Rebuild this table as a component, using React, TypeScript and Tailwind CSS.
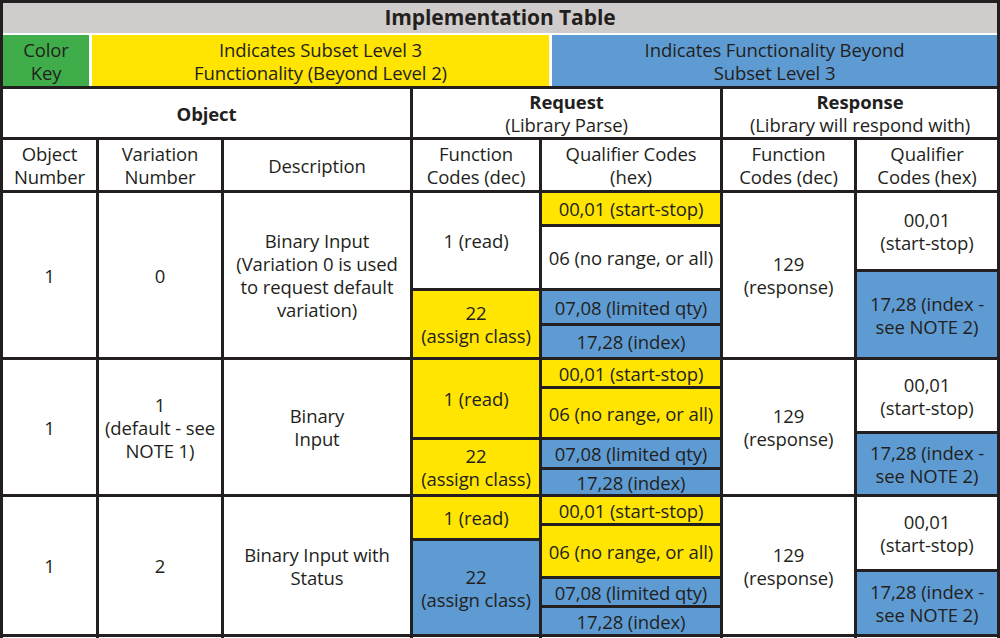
import React from "react";

const Y = "bg-[#ffe500]";
const B = "bg-[#5e9bd3]";
const W = "bg-white";

type Sub = { t: React.ReactNode; c: string; h?: string };

function Cell({ children, className = "" }: { children?: React.ReactNode; className?: string }) {
  return (
    <div className={`flex items-center justify-center text-center leading-[23px] ${className}`}>
      {children}
    </div>
  );
}

function Stack({ items }: { items: Sub[] }) {
  return (
    <div className="flex flex-col gap-[3px] bg-[#231f20]">
      {items.map((it, i) => (
        <Cell key={i} className={`${it.c} ${it.h ?? "flex-1"}`}>
          {it.t}
        </Cell>
      ))}
    </div>
  );
}

const read = "1 (read)";
const assign = (
  <span>
    22
    <br />
    (assign class)
  </span>
);
const resp = (
  <span>
    129
    <br />
    (response)
  </span>
);
const q0001 = (
  <span>
    00,01
    <br />
    (start-stop)
  </span>
);
const q1728 = (
  <span>
    17,28 (index -
    <br />
    see NOTE 2)
  </span>
);

export default function App() {
  return (
    <div
      className="w-[1000px] h-[638px] overflow-hidden bg-white text-[#231f20] text-[18.5px] font-medium tracking-[-0.1px]"
      style={{ fontFamily: "'Open Sans', 'Noto Sans', sans-serif" }}
    >
      <div className="border-[3px] border-[#231f20]">
        <div className="h-[30px] bg-[#d0cccb] flex items-center justify-center font-bold text-[21px]">
          Implementation Table
        </div>
        <div className="h-[2px] bg-white" />
        <div className="flex h-[51px] bg-white gap-[3px] leading-[24px]">
          <Cell className="w-[86px] bg-[#3fae4a]">
            <span>
              Color
              <br />
              Key
            </span>
          </Cell>
          <Cell className={`w-[457px] ${Y}`}>
            <span>
              Indicates Subset Level 3
              <br />
              Functionality (Beyond Level 2)
            </span>
          </Cell>
          <Cell className={`flex-1 ${B}`}>
            <span>
              Indicates Functionality Beyond
              <br />
              Subset Level 3
            </span>
          </Cell>
        </div>
        <div className="grid grid-cols-[93px_122px_186px_126px_178px_131px_140px] grid-rows-[48px_50px_164px_134px_137px_100px] gap-[3px] bg-[#231f20] pt-[3px]">
          <Cell className="col-span-3 bg-white font-bold">Object</Cell>
          <Cell className="col-span-2 bg-white">
            <span>
              <b>Request</b>
              <br />
              (Library Parse)
            </span>
          </Cell>
          <Cell className="col-span-2 bg-white">
            <span>
              <b>Response</b>
              <br />
              (Library will respond with)
            </span>
          </Cell>

          <Cell className={W}>
            <span>
              Object
              <br />
              Number
            </span>
          </Cell>
          <Cell className={W}>
            <span>
              Variation
              <br />
              Number
            </span>
          </Cell>
          <Cell className={W}>Description</Cell>
          <Cell className={W}>
            <span>
              Function
              <br />
              Codes (dec)
            </span>
          </Cell>
          <Cell className={W}>
            <span>
              Qualifier Codes
              <br />
              (hex)
            </span>
          </Cell>
          <Cell className={W}>
            <span>
              Function
              <br />
              Codes (dec)
            </span>
          </Cell>
          <Cell className={W}>
            <span>
              Qualifier
              <br />
              Codes (hex)
            </span>
          </Cell>

          {/* Row 1 */}
          <Cell className={W}>1</Cell>
          <Cell className={W}>0</Cell>
          <Cell className={W}>
            <span>
              Binary Input
              <br />
              (Variation 0 is used
              <br />
              to request default
              <br />
              variation)
            </span>
          </Cell>
          <Stack
            items={[
              { t: read, c: W, h: "h-[95px]" },
              { t: assign, c: Y },
            ]}
          />
          <Stack
            items={[
              { t: "00,01 (start-stop)", c: Y, h: "h-[31px]" },
              { t: "06 (no range, or all)", c: W, h: "h-[61px]" },
              { t: "07,08 (limited qty)", c: B, h: "h-[32px]" },
              { t: "17,28 (index)", c: B },
            ]}
          />
          <Cell className={W}>{resp}</Cell>
          <Stack
            items={[
              { t: q0001, c: W, h: "h-[76px]" },
              { t: q1728, c: B },
            ]}
          />

          {/* Row 2 */}
          <Cell className={W}>1</Cell>
          <Cell className={W}>
            <span>
              1
              <br />
              (default - see
              <br />
              NOTE 1)
            </span>
          </Cell>
          <Cell className={W}>
            <span>
              Binary
              <br />
              Input
            </span>
          </Cell>
          <Stack
            items={[
              { t: read, c: Y, h: "h-[77px]" },
              { t: assign, c: Y },
            ]}
          />
          <Stack
            items={[
              { t: "00,01 (start-stop)", c: Y, h: "h-[26px]" },
              { t: "06 (no range, or all)", c: Y, h: "h-[48px]" },
              { t: "07,08 (limited qty)", c: B, h: "h-[27px]" },
              { t: "17,28 (index)", c: B },
            ]}
          />
          <Cell className={W}>{resp}</Cell>
          <Stack
            items={[
              { t: q0001, c: W, h: "h-[71px]" },
              { t: q1728, c: B },
            ]}
          />

          {/* Row 3 */}
          <Cell className={W}>1</Cell>
          <Cell className={W}>2</Cell>
          <Cell className={W}>
            <span>
              Binary Input with
              <br />
              Status
            </span>
          </Cell>
          <Stack
            items={[
              { t: read, c: Y, h: "h-[41px]" },
              { t: assign, c: B },
            ]}
          />
          <Stack
            items={[
              { t: "00,01 (start-stop)", c: Y, h: "h-[26px]" },
              { t: "06 (no range, or all)", c: Y, h: "h-[50px]" },
              { t: "07,08 (limited qty)", c: B, h: "h-[26px]" },
              { t: "17,28 (index)", c: B },
            ]}
          />
          <Cell className={W}>{resp}</Cell>
          <Stack
            items={[
              { t: q0001, c: W, h: "h-[72px]" },
              { t: q1728, c: B },
            ]}
          />

          {/* Row 4 (cut off) */}
          <Cell className={W} />
          <Cell className={W} />
          <Cell className={W} />
          <Cell className={W} />
          <Cell className={W} />
          <Cell className={W} />
          <Cell className={W} />
        </div>
      </div>
    </div>
  );
}
